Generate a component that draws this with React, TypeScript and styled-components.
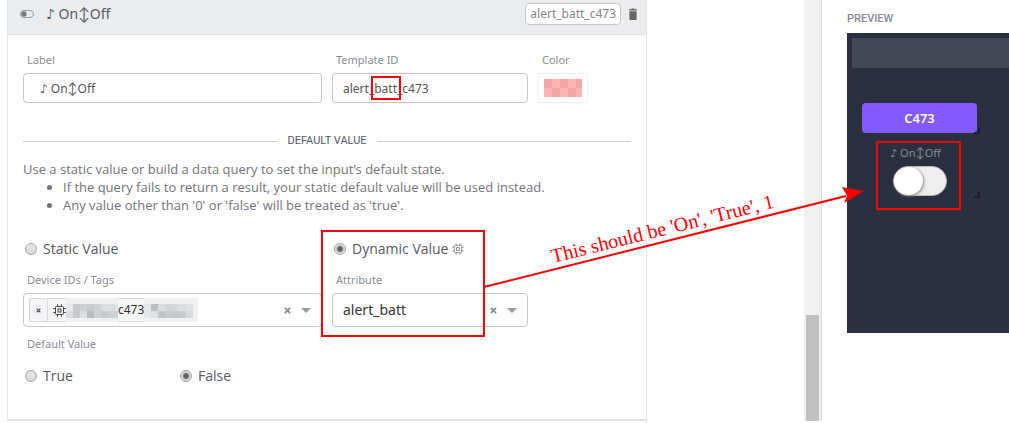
import React from "react";
import styled, { createGlobalStyle } from "styled-components";

const Global = createGlobalStyle`
  *, *::before, *::after { box-sizing: border-box; }
  body { margin: 0; background: #fff; color: #747478; font-family: "Noto Sans", Inter, "DejaVu Sans", sans-serif; font-size: 12px; line-height: 18px; }
  input, select, button { font: inherit; color: inherit; }
  button { border: 0; background: none; padding: 0; display: flex; align-items: center; justify-content: center; }
`;

const Page = styled.div`
  position: relative;
  display: grid;
  grid-template-columns: minmax(0, 1fr) 187px;
  overflow: hidden;
`;

const Editor = styled.main`
  display: flex;
  justify-content: space-between;
  border-right: 1px solid #d6d6d6;
`;

const Card = styled.section`
  flex: 0 1 640px;
  margin-left: 7px;
  border: solid #e4e4e4;
  border-width: 0 1px 2px;
`;

const CardHeader = styled.header`
  display: flex;
  align-items: center;
  height: 35px;
  padding: 0 8px 6px 12px;
  background: #ebecee;
  border-bottom: 1px solid #e0e0e0;
  color: #555a68;
`;

const Title = styled.h2`
  flex: 1;
  margin: 0 0 0 12px;
  font-size: 14px;
  line-height: 20px;
  font-weight: 400;
`;

const Badge = styled.span`
  height: 22px;
  margin-right: 7px;
  padding: 0 4px;
  border: 1px solid #c6c6c8;
  border-radius: 4px;
  background: #fff;
  color: #85868c;
  line-height: 20px;
`;

const CardBody = styled.div`
  padding: 16px 15px 33px;
`;

const FieldRow = styled.div<{ $top?: number }>`
  display: grid;
  grid-template-columns: minmax(0, 299px) minmax(0, 196px) 50px;
  column-gap: 10px;
  margin-top: ${(p) => p.$top ?? 0}px;
`;

const Field = styled.div`
  position: relative;
  min-width: 0;
`;

const Caption = styled.label`
  display: block;
  padding-left: 4px;
  color: #8a8c93;
  font-size: 11px;
  line-height: 18px;
`;

const TextInput = styled.input<{ $indent?: number }>`
  display: block;
  width: 100%;
  height: 30px;
  margin-top: 4px;
  padding: 0 10px 0 ${(p) => p.$indent ?? 10}px;
  border: 1px solid #c6c6c6;
  border-radius: 4px;
  background: #fff;
  color: #555;
`;

const Swatch = styled.button`
  width: 50px;
  height: 30px;
  margin-top: 4px;
  border: 1px solid #f2f2f2;
`;

const Divider = styled.h3`
  display: flex;
  align-items: center;
  gap: 10px;
  margin: 29px 0 10px;
  color: #555a68;
  font-family: Roboto, sans-serif;
  font-size: 11px;
  font-weight: 400;
  line-height: 18px;
  &::before, &::after { content: ""; flex: 1; height: 1px; background: #ccc; }
`;

const Help = styled.div`
  font-family: "Open Sans", sans-serif;
  font-size: 13px;
  ul { margin: 0; padding-left: 40px; }
`;

const Choices = styled.fieldset<{ $first: number; $top: number }>`
  display: grid;
  grid-template-columns: ${(p) => p.$first}px 1fr;
  margin: ${(p) => p.$top}px 0 0;
  padding: 0;
  border: 0;
`;

const GroupLabel = styled.div`
  margin-top: 8px;
  padding: 0 0 0 4px;
  color: #8a8c93;
  font-size: 11px;
  line-height: 18px;
`;

const Choice = styled.label`
  display: flex;
  align-items: center;
  gap: 6px;
  height: 20px;
  padding-left: 2px;
  color: #555a68;
  font-family: "Open Sans", sans-serif;
  font-size: 14px;
`;

const ChoiceText = styled.span`
  margin-right: -2px;
`;

const Radio = styled.input`
  appearance: none;
  flex: none;
  width: 12px;
  height: 12px;
  margin: 0;
  border: 1px solid #a3a3a3;
  border-radius: 50%;
  background: linear-gradient(#e6e6e6, #dadada);
  &:checked { background: radial-gradient(circle, #606060 0 2px, #dedede 4px); }
`;

const SelectBox = styled.div`
  display: flex;
  align-items: center;
  height: 34px;
  margin-top: 4px;
  padding: 0 10px 0 5px;
  border: 1px solid #c6c6c6;
  border-radius: 4px;
`;

const Tag = styled.span`
  display: flex;
  align-items: center;
  height: 24px;
  border: 1px solid #d8dade;
  border-right: 0;
  border-radius: 2px;
  background: #f3f4f6;
  color: #333;
`;

const TagRemove = styled.button`
  width: 18px;
  height: 22px;
  margin-right: 5px;
  border-right: 1px solid #d8dade;
`;

const TagSearch = styled.input`
  flex: 1;
  min-width: 0;
  border: 0;
  background: none;
`;

const AttributeSelect = styled.select`
  appearance: none;
  flex: 1;
  min-width: 0;
  padding: 0 0 0 5px;
  border: 0;
  background: none;
  color: #333;
  font-size: 14px;
`;

const Clear = styled.button`
  width: 14px;
  height: 20px;
  margin-right: 7px;
`;

const Scrollbar = styled.div`
  display: flex;
  align-items: flex-end;
  width: 17px;
  padding: 0 2px;
  background: #f0f0f0;
`;

const Thumb = styled.div`
  flex: 1;
  height: 106px;
  background: #c0c0c0;
`;

const Preview = styled.aside`
  padding: 10px 0 0 25px;
`;

const PreviewTitle = styled.h2`
  margin: 0 0 5px;
  color: #85888f;
  font: 500 11px/18px Roboto, sans-serif;
`;

const Device = styled.div`
  height: 300px;
  padding: 5px 0 0 5px;
  background: #2a3040;
`;

const DeviceBar = styled.div`
  height: 30px;
  background: #434855;
`;

const Widget = styled.div`
  position: relative;
  width: 118px;
  margin-left: 10px;
`;

const DeviceButton = styled.button`
  width: 115px;
  height: 30px;
  margin-top: 35px;
  border-radius: 4px;
  background: #825aff;
  color: #fff;
  font-weight: 600;
  font-size: 13px;
`;

const Handle = styled.i`
  position: absolute;
  right: 0;
  bottom: -1px;
  width: 6px;
  height: 6px;
  border: solid #1b1e27;
  border-width: 0 2px 2px 0;
`;

const ToggleWidget = styled(Widget)`
  display: flex;
  flex-direction: column;
  align-items: center;
  height: 64px;
  padding: 11px 2px 0 0;
`;

const ToggleLabel = styled.label`
  padding-right: 9px;
  color: #888c95;
  font-size: 11px;
  line-height: 18px;
`;

const Toggle = styled.input`
  appearance: none;
  width: 54px;
  height: 30px;
  margin: 4px 0 0;
  border: 1px solid #bbb;
  border-radius: 15px;
  background: #eee;
  &::before {
    content: "";
    display: block;
    width: 29px;
    height: 28px;
    border-radius: 50%;
    background: #fff;
    box-shadow: 1px 1px 3px #888;
  }
`;

const Markup = styled.svg`
  position: absolute;
  top: 0;
  left: 0;
  pointer-events: none;
`;

const Chip = ({ size, color }: { size: number; color: string }) => (
  <svg width={size} height={size} viewBox="0 0 13 13" fill="none" stroke={color}>
    <rect x="2.5" y="2.5" width="8" height="8" rx="1" />
    <rect x="5" y="5" width="3" height="3" />
    <path d="M4.500 .3v2M8.500 .3v2M4.500 10.700v2M8.500 10.700v2M.3 4.500h2M.3 8.500h2M10.700 4.500h2M10.700 8.500h2" />
  </svg>
);

const Cross = ({ size, color }: { size: number; color: string }) => (
  <svg width={size} height={size} viewBox="0 0 8 8" stroke={color} strokeWidth="1.9">
    <path d="M1 1l6 6M7 1L1 7" />
  </svg>
);

const Caret = () => (
  <svg width="10" height="5" viewBox="0 0 10 5" fill="#999"><path d="M0 0h10L5 5z" /></svg>
);

const Mosaic = ({ width, shades }: { width: number; shades: string[][] }) => (
  <svg width={width} height="24" viewBox={`0 0 ${width} 24`} shapeRendering="crispEdges">
    <rect width={width} height="24" fill="#f0f1f3" />
    {shades.map((row, y) =>
      row.map((fill, x) => <rect key={`${x}-${y}`} x={x * 7} y={6 + y * 7} width="7" height="7" fill={fill} />)
    )}
  </svg>
);

const leftShades = [
  ["#e6e7e9", "#c9cace", "#cfd0d4", "#c9cace", "#d0d1d4", "#dcdde0", "#dcdde0", "#e2e3e5"],
  ["#dcdde0", "#c9cace", "#dcdde0", "#b9bac0", "#d0d1d4", "#c9cace", "#cfd0d4", "#cfd0d4"],
];
const rightShades = [
  ["#e6e7e9", "#bcbdc3", "#dcdde0", "#d3d4d7", "#d8d9dc", "#dcdde0", "#e0e1e3"],
  ["#e6e7e9", "#e0e1e3", "#c3c4c9", "#c9cace", "#c6c7cb", "#c9cace", "#d8d9dc"],
];

export default function App() {
  return (
    <Page>
      <Global />
      <Editor>
        <Card>
          <CardHeader>
            <svg width="14" height="8" viewBox="0 0 14 8">
              <rect x=".5" y=".5" width="13" height="7" rx="3.5" fill="none" stroke="#999ba1" />
              <circle cx="4" cy="4" r="2.7" fill="#777a82" />
            </svg>
            <Title>♪ On↕Off</Title>
            <Badge>alert_batt_c473</Badge>
            <button aria-label="Delete">
              <svg width="10" height="12" viewBox="0 0 10 12" fill="#666">
                <path d="M1 1.200h2L3.600.5h2.800l.6.700h2v1.300H1zM1.400 3.200h7.200V11q0 1-1 1H2.400q-1 0-1-1z" />
              </svg>
            </button>
          </CardHeader>
          <CardBody>
            <FieldRow>
              <Field>
                <Caption htmlFor="label">Label</Caption>
                <TextInput id="label" $indent={16} defaultValue="♪ On↕Off" />
              </Field>
              <Field>
                <Caption htmlFor="template">Template ID</Caption>
                <TextInput id="template" defaultValue="alert_batt_c473" />
              </Field>
              <Field>
                <Caption htmlFor="color">Color</Caption>
                <Swatch id="color">
                  <svg width="38" height="18" viewBox="0 0 38 18" shapeRendering="crispEdges">
                    <rect width="38" height="18" fill="#ffb3b3" />
                    <path fill="#f0a8a8" d="M0 0h8v9H0zM16 0h8v9h-8zM32 0h6v9h-6zM8 9h8v9H8zM24 9h8v9h-8z" />
                  </svg>
                </Swatch>
              </Field>
            </FieldRow>
            <Divider>DEFAULT VALUE</Divider>
            <Help>
              Use a static value or build a data query to set the input’s default state.
              <ul>
                <li>If the query fails to return a result, your static default value will be used instead.</li>
                <li>Any value other than '0' or 'false' will be treated as 'true'.</li>
              </ul>
            </Help>
            <Choices $first={309} $top={25}>
              <Choice><Radio type="radio" name="mode" />Static Value</Choice>
              <Choice>
                <Radio type="radio" name="mode" defaultChecked />
                <ChoiceText>Dynamic Value</ChoiceText>
                <Chip size={12} color="#888" />
              </Choice>
            </Choices>
            <FieldRow $top={12}>
              <Field>
                <Caption htmlFor="tags">Device IDs / Tags</Caption>
                <SelectBox>
                  <Tag>
                    <TagRemove aria-label="Remove tag"><Cross size={5} color="#444" /></TagRemove>
                    <Chip size={13} color="#444" />
                    <Mosaic width={52} shades={leftShades} />
                    c473
                    <Mosaic width={54} shades={rightShades} />
                  </Tag>
                  <TagSearch id="tags" />
                  <Clear aria-label="Clear"><Cross size={7} color="#888" /></Clear>
                  <Caret />
                </SelectBox>
              </Field>
              <Field>
                <Caption htmlFor="attribute">Attribute</Caption>
                <SelectBox>
                  <AttributeSelect id="attribute"><option>alert_batt</option></AttributeSelect>
                  <Clear aria-label="Clear"><Cross size={7} color="#888" /></Clear>
                  <Caret />
                </SelectBox>
              </Field>
            </FieldRow>
            <GroupLabel id="default-value">Default Value</GroupLabel>
            <Choices $first={155} $top={13} aria-labelledby="default-value">
              <Choice><Radio type="radio" name="value" />True</Choice>
              <Choice><Radio type="radio" name="value" defaultChecked />False</Choice>
            </Choices>
          </CardBody>
        </Card>
        <Scrollbar><Thumb /></Scrollbar>
      </Editor>
      <Preview>
        <PreviewTitle>PREVIEW</PreviewTitle>
        <Device>
          <DeviceBar />
          <Widget><DeviceButton>C473</DeviceButton><Handle /></Widget>
          <ToggleWidget>
            <ToggleLabel htmlFor="toggle">♪ On↕Off</ToggleLabel>
            <Toggle id="toggle" type="checkbox" />
            <Handle />
          </ToggleWidget>
        </Device>
      </Preview>
      <Markup width="1009" height="421" viewBox="0 0 1009 421" fill="none" stroke="#f00" strokeWidth="2">
        <rect x="372" y="77" width="28" height="22" />
        <rect x="322" y="231" width="162" height="105" />
        <rect x="877" y="142" width="83" height="67" />
        <path d="M484 287L846 196" />
        <path d="M864 191l-22-4 5 9-3 7z" fill="#f00" stroke="none" />
        <text transform="translate(553 263) rotate(-14)" fill="#f00" stroke="none" fontFamily="Liberation Serif, serif" fontSize="20">This should be 'On', 'True', 1</text>
      </Markup>
    </Page>
  );
}
